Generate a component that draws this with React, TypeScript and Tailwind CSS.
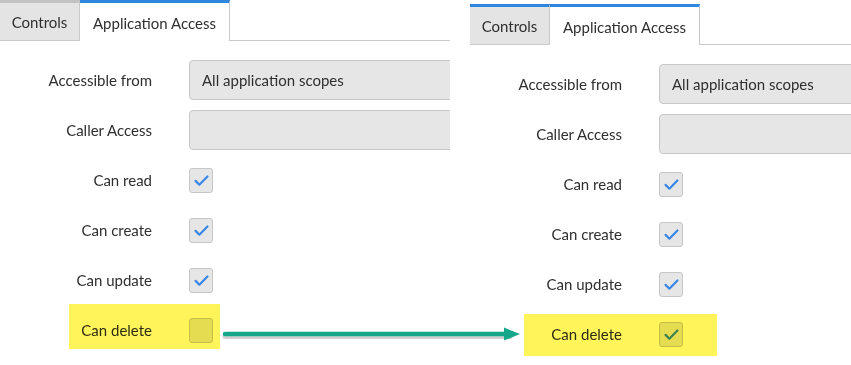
import React from 'react';
import clsx from 'clsx';

const font = { fontFamily: 'Lato, "Open Sans", sans-serif' };

const CheckMark: React.FC = () => (
  <svg viewBox="0 0 24 24" className="h-[19px] w-[19px]" fill="none">
    <path d="M4.5 12.5l4.8 4.8L19.5 7" stroke="#3b87e6" strokeWidth="2.8" strokeLinecap="round" strokeLinejoin="round" />
  </svg>
);

const Checkbox: React.FC<{ checked: boolean }> = ({ checked }) => (
  <div className="flex h-[25px] w-[24px] items-center justify-center rounded-[3px] border border-[#c6c6c6] bg-[#e6e6e6]">
    {checked && <CheckMark />}
  </div>
);

const Row: React.FC<{ label: string; children: React.ReactNode }> = ({ label, children }) => (
  <div className="flex h-[40px] items-center gap-[37px]">
    <div className="w-[152px] shrink-0 text-right text-[15px] text-[#2f2f2f]">{label}</div>
    {children}
  </div>
);

interface PanelProps {
  canDelete: boolean;
  blueControls?: boolean;
  highlight: string;
  className?: string;
}

const Panel: React.FC<PanelProps> = ({ canDelete, blueControls, highlight, className }) => (
  <div className={clsx('relative overflow-hidden', className)} style={font}>
    <div className="flex h-[41px]">
      <div
        className={clsx(
          'flex w-[80px] items-center justify-center border-t-[3px] border-r border-b border-r-[#c9c9c9] border-b-[#c9c9c9] bg-[#e4e4e4] pt-[2px] text-[15px] text-[#2f2f2f]',
          blueControls ? 'border-t-[#2f86df]' : 'border-t-[#c2c2c2]'
        )}
      >
        Controls
      </div>
      <div className="flex w-[150px] items-center justify-center border-t-[3px] border-r border-t-[#2f86df] border-r-[#c9c9c9] bg-white pt-[2px] text-[15px] text-[#2f2f2f]">
        Application Access
      </div>
      <div className="flex-1 border-b border-[#c9c9c9]" />
    </div>

    <div className="mt-[19px] flex flex-col gap-[10px]">
      <Row label="Accessible from">
        <div className="flex h-[40px] w-[420px] shrink-0 items-center rounded-[4px] border border-[#c9c9c9] bg-[#e6e6e6] pl-[12px] text-[15px] text-[#2f2f2f]">
          All application scopes
        </div>
      </Row>
      <Row label="Caller Access">
        <div className="h-[40px] w-[420px] shrink-0 rounded-[4px] border border-[#c9c9c9] bg-[#e6e6e6]" />
      </Row>
      <Row label="Can read">
        <Checkbox checked />
      </Row>
      <Row label="Can create">
        <Checkbox checked />
      </Row>
      <Row label="Can update">
        <Checkbox checked />
      </Row>
      <div className="relative">
        <Row label="Can delete">
          <Checkbox checked={canDelete} />
        </Row>
        {/* highlighter mark */}
        <div className={clsx('pointer-events-none absolute bg-[#fff45a] mix-blend-multiply', highlight)} />
      </div>
    </div>
  </div>
);

const Arrow: React.FC = () => (
  <svg className="pointer-events-none absolute left-[220px] top-[324px]" width="306" height="22" viewBox="0 0 306 22">
    <path d="M5 12.5H290" stroke="#9a9a9a" strokeOpacity="0.45" strokeWidth="5" strokeLinecap="round" />
    <path d="M5 10H288" stroke="#16a68a" strokeWidth="4.5" strokeLinecap="round" />
    <path d="M284 3.5L300 10L284 16.5Z" fill="#16a68a" />
  </svg>
);

export default function App() {
  return (
    <div className="relative flex h-[365px] w-[851px] overflow-hidden bg-white">
      <Panel canDelete={false} highlight="left-[69px] top-[-6px] h-[45px] w-[151px]" className="w-[450px] shrink-0" />
      <Panel
        canDelete
        blueControls
        highlight="left-[54px] top-[0px] h-[42px] w-[193px]"
        className="min-w-0 flex-1 pl-[20px] pt-[4px]"
      />
      <Arrow />
    </div>
  );
}
